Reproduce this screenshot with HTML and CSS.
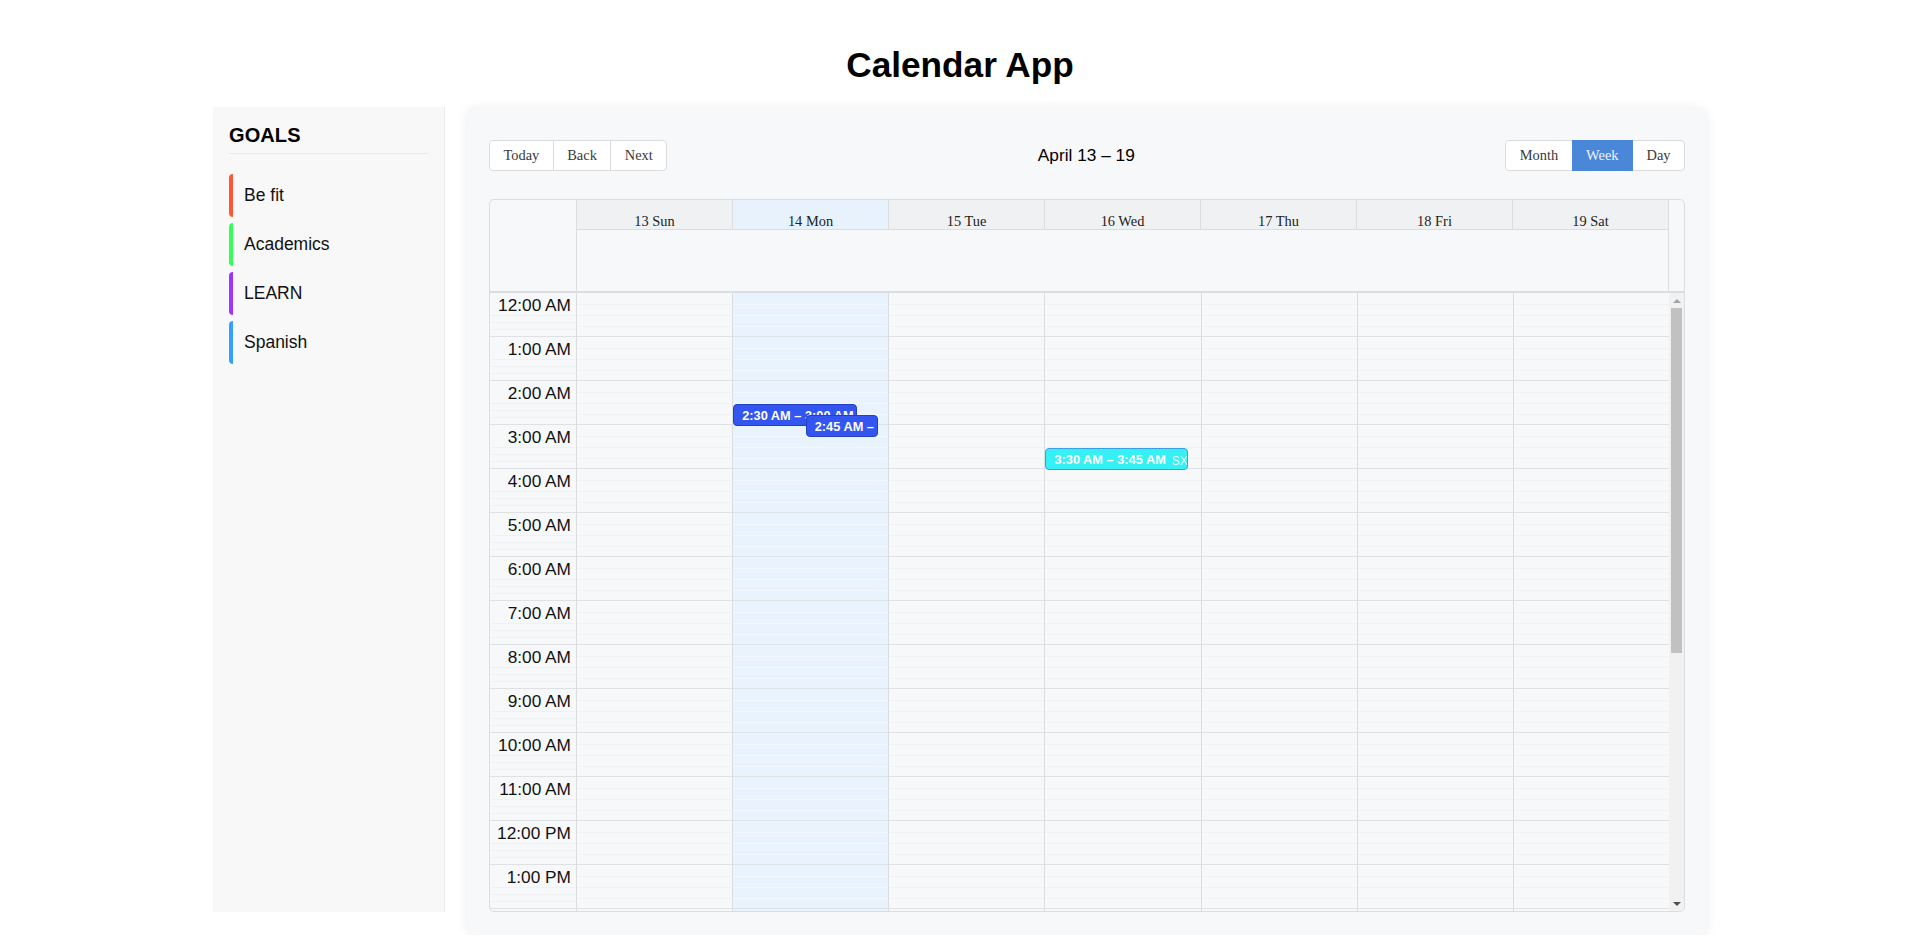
FILE: index.html
```html
<!DOCTYPE html>
<html lang="en">
<head>
<meta charset="utf-8">
<title>Calendar App</title>
<link rel="stylesheet" href="styles.css">
</head>
<body>
<div class="page">
  <h1 class="title">Calendar App</h1>
  <div class="layout">
    <aside class="sidebar">
      <h2 class="goals-title">GOALS</h2>
      <ul class="goal-list">
        <li class="goal goal-fit">Be fit</li>
        <li class="goal goal-academics">Academics</li>
        <li class="goal goal-learn">LEARN</li>
        <li class="goal goal-spanish">Spanish</li>
      </ul>
    </aside>
    <main class="card">
      <div class="toolbar">
        <div class="btn-group">
          <button class="btn">Today</button>
          <button class="btn">Back</button>
          <button class="btn">Next</button>
        </div>
        <div class="toolbar-label">April 13 – 19</div>
        <div class="btn-group">
          <button class="btn">Month</button>
          <button class="btn btn-active">Week</button>
          <button class="btn">Day</button>
        </div>
      </div>
      <div class="timeview">
        <div class="time-header">
          <div class="header-gutter"></div>
          <div class="header-content">
            <div class="header-row">
              <div class="day-header">13 Sun</div>
              <div class="day-header today">14 Mon</div>
              <div class="day-header">15 Tue</div>
              <div class="day-header">16 Wed</div>
              <div class="day-header">17 Thu</div>
              <div class="day-header">18 Fri</div>
              <div class="day-header">19 Sat</div>
            </div>
            <div class="allday"></div>
          </div>
        </div>
        <div class="time-content">
          <div class="time-scroll">
            <div class="gutter">
              <div class="slot-group"><span class="time-label">12:00 AM</span></div>
              <div class="slot-group"><span class="time-label">1:00 AM</span></div>
              <div class="slot-group"><span class="time-label">2:00 AM</span></div>
              <div class="slot-group"><span class="time-label">3:00 AM</span></div>
              <div class="slot-group"><span class="time-label">4:00 AM</span></div>
              <div class="slot-group"><span class="time-label">5:00 AM</span></div>
              <div class="slot-group"><span class="time-label">6:00 AM</span></div>
              <div class="slot-group"><span class="time-label">7:00 AM</span></div>
              <div class="slot-group"><span class="time-label">8:00 AM</span></div>
              <div class="slot-group"><span class="time-label">9:00 AM</span></div>
              <div class="slot-group"><span class="time-label">10:00 AM</span></div>
              <div class="slot-group"><span class="time-label">11:00 AM</span></div>
              <div class="slot-group"><span class="time-label">12:00 PM</span></div>
              <div class="slot-group"><span class="time-label">1:00 PM</span></div>
              <div class="slot-group slot-group-last"></div>
            </div>
            <div class="day-col"></div>
            <div class="day-col today">
              <div class="events">
                <div class="event event-blue" style="top:111px;height:22px;left:0;width:85%"><span class="event-label">2:30 AM – 3:00 AM</span></div>
                <div class="event event-blue" style="top:122px;height:22px;left:50%;width:50%"><span class="event-label">2:45 AM –</span></div>
              </div>
            </div>
            <div class="day-col"></div>
            <div class="day-col">
              <div class="events">
                <div class="event event-cyan" style="top:155px;height:22px;left:0;width:98%"><span class="event-label">3:30 AM – 3:45 AM</span><span class="event-title">SX</span></div>
              </div>
            </div>
            <div class="day-col"></div>
            <div class="day-col"></div>
            <div class="day-col"></div>
          </div>
          <div class="scrollbar">
            <div class="sb-button"><span class="sb-arrow-up"></span></div>
            <div class="sb-track"><div class="sb-thumb"></div></div>
            <div class="sb-button"><span class="sb-arrow-down"></span></div>
          </div>
        </div>
      </div>
    </main>
  </div>
</div>
</body>
</html>
```

FILE: styles.css
```css
html, body {
  margin: 0;
  overflow: hidden;
}

body {
  padding-left: 5px;
  background: #ffffff;
  font-family: "Liberation Sans", Arial, sans-serif;
  color: #000;
}

.page {
  display: flex;
  flex-direction: column;
  align-items: center;
}

.title {
  margin: 45px 0 22px;
  font-size: 35.2px;
  line-height: 40px;
  font-weight: 700;
  color: #000;
}

.layout {
  display: flex;
  align-items: flex-start;
  gap: 22px;
  width: 1494px;
}

/* Sidebar */
.sidebar {
  flex: 0 0 232px;
  box-sizing: border-box;
  height: 805px;
  padding: 17px 16px 17px 16px;
  background: #f8f8f8;
  border-right: 1px solid #ececec;
}

.goals-title {
  margin: 0 0 20px;
  padding: 0 0 6px;
  font-size: 20px;
  line-height: 23px;
  font-weight: 700;
  letter-spacing: 0.1px;
  border-bottom: 1px solid #e9e9e9;
}

.goal-list {
  list-style: none;
  margin: 0;
  padding: 0;
}

.goal {
  display: flex;
  align-items: center;
  box-sizing: border-box;
  height: 43px;
  margin-bottom: 6px;
  padding-left: 11px;
  border-left: 4px solid;
  border-radius: 4px;
  font-size: 17.5px;
  color: #111;
}

.goal-fit { border-left-color: #ff5733; }
.goal-academics { border-left-color: #33ff57; }
.goal-learn { border-left-color: #a133ff; }
.goal-spanish { border-left-color: #33a1ff; }

/* Card */
.card {
  flex: 0 0 1240px;
  box-sizing: border-box;
  height: 828px;
  padding: 22px 22px 23px;
  background: #f7f8fa;
  border-radius: 9px;
  box-shadow: 0 2px 12px rgba(0, 0, 0, 0.08);
}

.toolbar {
  display: flex;
  align-items: center;
  margin: 11px 0 28px;
  height: 31px;
}

.btn-group {
  display: flex;
}

.btn {
  box-sizing: border-box;
  height: 31px;
  margin: 0;
  padding: 0 13.5px;
  font-family: "Liberation Serif", "Times New Roman", serif;
  font-size: 14.4px;
  line-height: 29px;
  color: #373a3c;
  background: #ffffff;
  border: 1px solid #dcdcdc;
  border-radius: 0;
  white-space: nowrap;
}

.btn + .btn {
  margin-left: -1px;
}

.btn:first-child {
  border-radius: 4px 0 0 4px;
}

.btn:last-child {
  border-radius: 0 4px 4px 0;
}

.btn-active {
  position: relative;
  background: #4a87d9;
  border-color: #4a87d9;
  color: #eef3fb;
}

.toolbar-label {
  flex: 1;
  text-align: center;
  font-size: 17.28px;
  color: #000;
}

/* Time view */
.timeview {
  box-sizing: border-box;
  height: 713px;
  display: flex;
  flex-direction: column;
  border: 1px solid #dcdde0;
  border-radius: 5px;
  overflow: hidden;
  background: #f7f8fa;
}

.time-header {
  display: flex;
  flex: 0 0 91px;
}

.header-gutter {
  flex: 0 0 86px;
}

.header-content {
  flex: 1;
  display: flex;
  flex-direction: column;
  margin-right: 15px;
  border-left: 1px solid #dcdde0;
  border-right: 1px solid #dcdde0;
}

.header-row {
  display: flex;
  height: 30px;
  box-sizing: border-box;
  border-bottom: 1px solid #dcdde0;
}

.day-header {
  flex: 1;
  display: flex;
  align-items: flex-end;
  justify-content: center;
  background: #f0f1f3;
  font-family: "Liberation Serif", "Times New Roman", serif;
  font-size: 14.4px;
  line-height: 16px;
  color: #222;
}

.day-header + .day-header {
  border-left: 1px solid #dcdde0;
}

.day-header.today {
  background: #e7f2fd;
}

.allday {
  flex: 1;
}

.time-content {
  flex: 1;
  display: flex;
  min-height: 0;
  border-top: 2px solid #dcdde0;
}

.time-scroll {
  flex: 1;
  display: flex;
  align-items: flex-start;
  overflow: hidden;
}

.gutter {
  flex: 0 0 86px;
}

.slot-group {
  box-sizing: border-box;
  height: 44px;
  padding: 2px 5px 0 0;
  text-align: right;
  border-bottom: 1px solid #e0e1e4;
  background-image: linear-gradient(to bottom,
    transparent 22px, #f0f1f3 22px 23px,
    transparent 23px 29px, #f0f1f3 29px 30px,
    transparent 30px 36px, #f0f1f3 36px 37px,
    transparent 37px);
}

.time-label {
  display: block;
  font-size: 17.28px;
  line-height: 20px;
  color: #111;
}

.day-col {
  --slot-line: #f1f2f4;
  position: relative;
  flex: 1;
  height: 660px;
  border-left: 1px solid #dcdde0;
  background-image: repeating-linear-gradient(to bottom,
    transparent 0 11px, var(--slot-line) 11px 12px,
    transparent 12px 22px, var(--slot-line) 22px 23px,
    transparent 23px 33px, var(--slot-line) 33px 34px,
    transparent 34px 43px, #e0e1e4 43px 44px);
}

.day-col.today {
  --slot-line: #f3f8fe;
  background-color: #e8f3fd;
}

.events {
  position: absolute;
  top: 0;
  bottom: 0;
  left: 0;
  right: 10px;
}

.event {
  position: absolute;
  box-sizing: border-box;
  display: flex;
  align-items: center;
  padding: 0 7px 0 8px;
  border: 1px solid;
  border-radius: 4px;
  overflow: hidden;
  white-space: nowrap;
  color: #ffffff;
}

.event-blue {
  background: #3355f0;
  border-color: #2440c0;
}

.event-cyan {
  background: #35f1f6;
  border-color: #3b9fe3;
}

.event-label {
  flex: none;
  font-size: 12.8px;
  font-weight: 700;
  padding-right: 6px;
}

.event-title {
  font-size: 12px;
  padding-top: 3px;
  color: rgba(255, 255, 255, 0.9);
}

/* Scrollbar */
.scrollbar {
  flex: 0 0 15px;
  display: flex;
  flex-direction: column;
  background: #f1f1f1;
}

.sb-button {
  flex: 0 0 15px;
  display: flex;
  align-items: center;
  justify-content: center;
}

.sb-arrow-up {
  width: 0;
  height: 0;
  border-left: 4px solid transparent;
  border-right: 4px solid transparent;
  border-bottom: 4px solid #a3a3a3;
}

.sb-arrow-down {
  width: 0;
  height: 0;
  border-left: 4px solid transparent;
  border-right: 4px solid transparent;
  border-top: 4px solid #505050;
}

.sb-track {
  flex: 1;
  padding: 0 2px;
}

.sb-thumb {
  height: 345px;
  background: #c1c1c1;
}
```
